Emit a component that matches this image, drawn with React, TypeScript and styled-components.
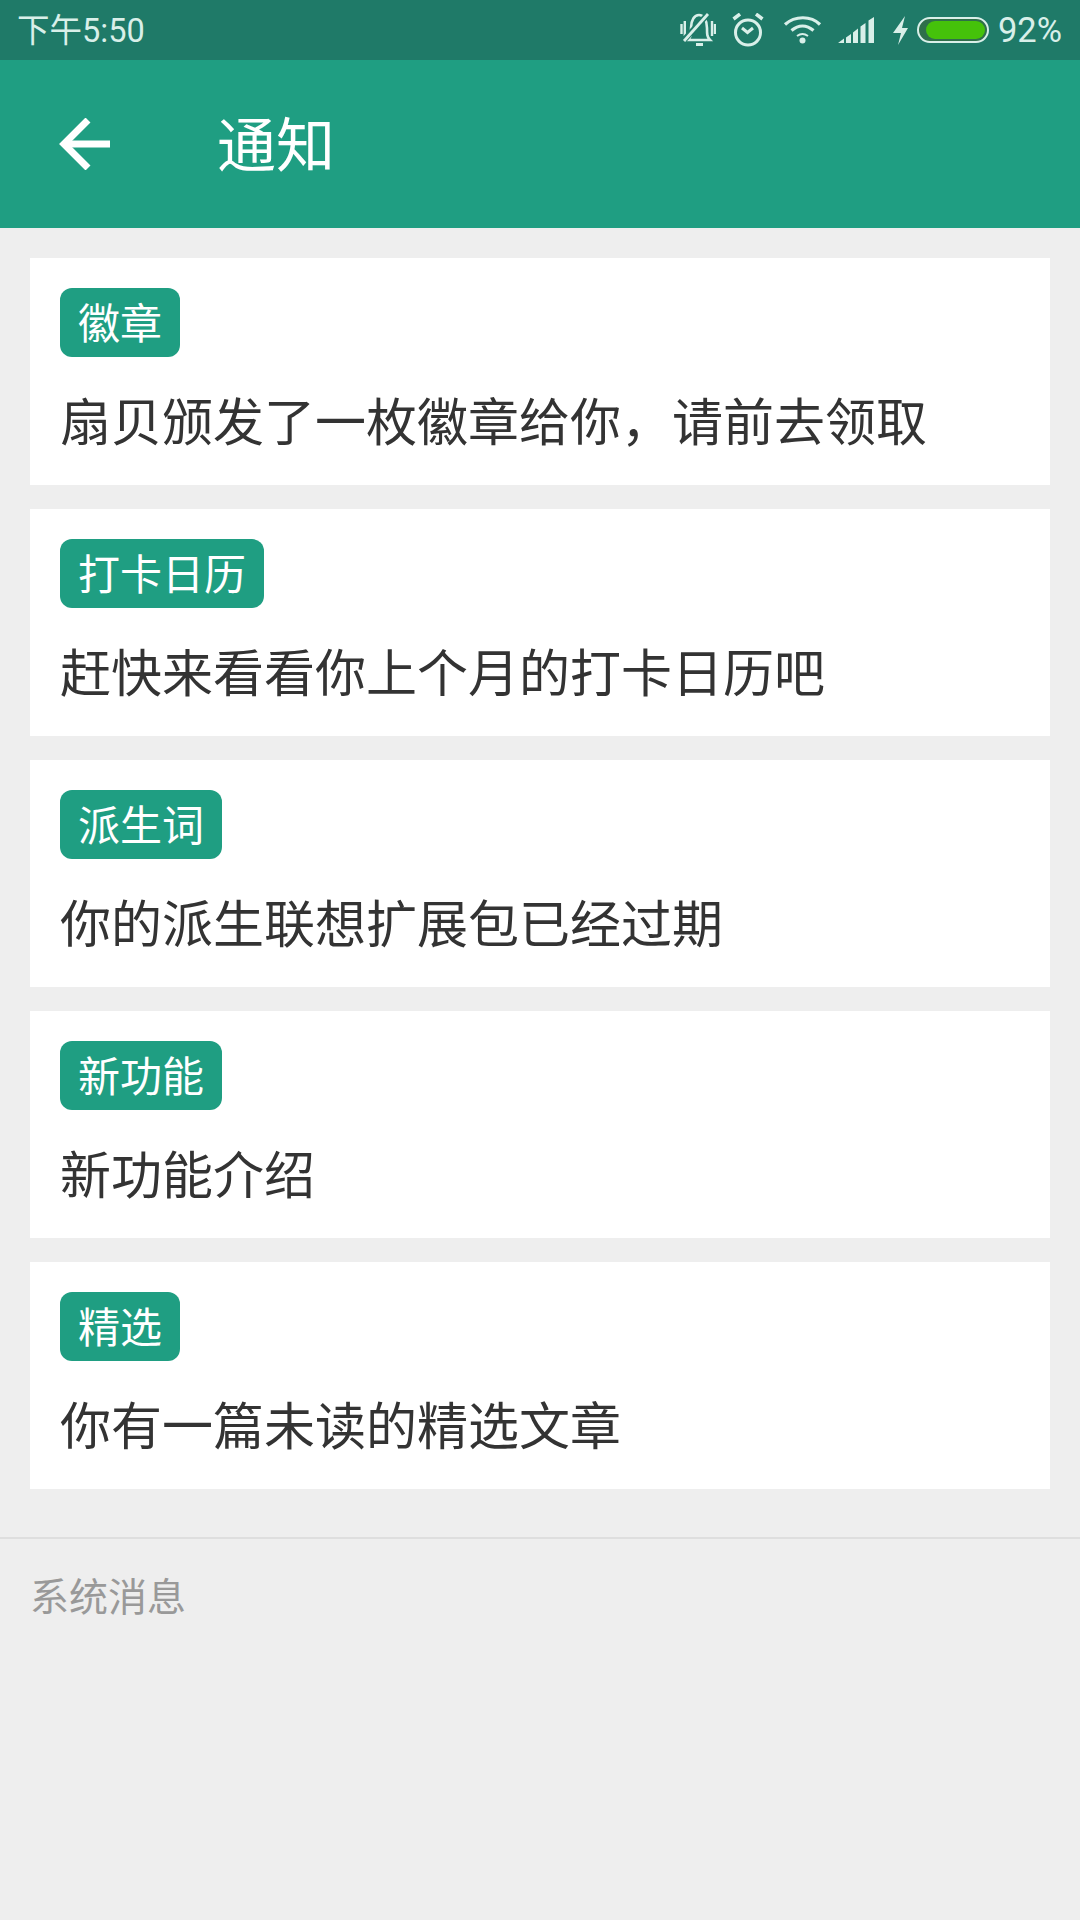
import React from 'react';
import styled, { createGlobalStyle } from 'styled-components';

const CJK = `"Noto Sans CJK SC", "Noto Sans", sans-serif`;

const GlobalStyle = createGlobalStyle`
  html, body {
    margin: 0;
    padding: 0;
    background: #eeeeee;
  }
`;

const NOTICES = [
  { tag: '徽章', text: '扇贝颁发了一枚徽章给你，请前去领取' },
  { tag: '打卡日历', text: '赶快来看看你上个月的打卡日历吧' },
  { tag: '派生词', text: '你的派生联想扩展包已经过期' },
  { tag: '新功能', text: '新功能介绍' },
  { tag: '精选', text: '你有一篇未读的精选文章' },
];

export default function App() {
  return (
    <Page>
      <GlobalStyle />
      <StatusBar>
        <Time>下午5:50</Time>
        <StatusIcons>
          <MuteIcon />
          <AlarmIcon />
          <WifiIcon />
          <SignalIcon />
          <BoltIcon />
          <Battery>
            <BatteryFill />
          </Battery>
          <Percent>92%</Percent>
        </StatusIcons>
      </StatusBar>
      <Toolbar>
        <BackIcon />
        <ToolbarTitle>通知</ToolbarTitle>
      </Toolbar>
      <NoticeList>
        {NOTICES.map(({ tag, text }) => (
          <NoticeCard key={tag}>
            <Tag>{tag}</Tag>
            <NoticeText>{text}</NoticeText>
          </NoticeCard>
        ))}
      </NoticeList>
      <SystemSection>
        <SystemLabel>系统消息</SystemLabel>
      </SystemSection>
    </Page>
  );
}

function MuteIcon() {
  return (
    <svg width="36" height="34" viewBox="0 0 36 34" fill="none" stroke="#d9efe9" strokeWidth="2.600">
      <path d="M8 27c3-3 3-6 3-12 0-8 3.500-13 8-13s8 5 8 13c0 6 0 9 3 12z" />
      <path d="M16 31.500h7" strokeWidth="3" />
      <path d="M1.500 11v10M4.800 8v15M32 8v15M35 11v10" strokeWidth="2.400" />
      <path d="M4 27 28 1" stroke="#1f7a68" strokeWidth="6" />
      <path d="M4 28 28 1" strokeWidth="2.800" />
    </svg>
  );
}

function AlarmIcon() {
  return (
    <svg width="34" height="34" viewBox="0 0 34 34" fill="none" stroke="#d9efe9" strokeWidth="3">
      <circle cx="16" cy="19.500" r="12.500" />
      <path d="M10 15l5.500 4.500L21 15" />
      <path d="M1.500 6l6.500-5M30.500 6 24 1" strokeWidth="3.500" />
    </svg>
  );
}

function WifiIcon() {
  return (
    <svg width="40" height="28" viewBox="0 0 40 28" fill="none" stroke="#d9efe9" strokeWidth="3.200">
      <path d="M3 8.500c10-9 26-9 35 0" />
      <path d="M9.500 14.500c7-6 15-6 22 0" />
      <path d="M15 20c3.500-2.500 7.500-2.500 11 0" strokeWidth="2" />
      <circle cx="20.500" cy="24.500" r="3" fill="#d9efe9" stroke="none" />
    </svg>
  );
}

function SignalIcon() {
  return (
    <svg width="38" height="26" viewBox="0 0 38 26" fill="#d9efe9">
      <path d="M0 26l6-4.500V26zM8 20.500l5-3.500v9H8zM15 15.500l5-4V26h-5zM22.500 9.500l5-3.500v20h-5zM30.500 3.500 36 0v26h-5.500z" />
    </svg>
  );
}

function BoltIcon() {
  return (
    <svg width="18" height="30" viewBox="0 0 18 30" fill="#d9efe9">
      <path d="M13 1 1 18h8L6 30l10-17h-6z" />
    </svg>
  );
}

function BackIcon() {
  return (
    <BackSvg width="52" height="52" viewBox="0 0 52 52" fill="none" stroke="#ffffff" strokeWidth="7">
      <path d="M51 26H5" />
      <path d="M29 2 5 26l24 24" />
    </BackSvg>
  );
}

const Page = styled.div`
  width: 1080px;
  height: 1920px;
  overflow: hidden;
  display: flex;
  flex-direction: column;
  background: #eeeeee;
  font-family: ${CJK};
`;

const StatusBar = styled.div`
  height: 60px;
  background: #1f7a68;
  display: flex;
  align-items: center;
  justify-content: space-between;
  padding: 0 18px;
  box-sizing: border-box;
`;

const Time = styled.span`
  color: #d9efe9;
  font-size: 32.500px;
  line-height: 1;
  margin: 2px 0 0 -1px;
  font-family: Roboto, ${CJK};
`;

const StatusIcons = styled.div`
  display: flex;
  align-items: center;
  gap: 16px;
`;

const Battery = styled.div`
  width: 72px;
  height: 26px;
  box-sizing: border-box;
  border: 2px solid #d9efe9;
  border-radius: 13px;
  padding: 2px;
  margin-left: -9px;
  background: #2f6f4a;
`;

const BatteryFill = styled.div`
  width: 92%;
  height: 100%;
  margin-left: auto;
  background: #45c20a;
  border-radius: 9px;
`;

const Percent = styled.span`
  color: #d9efe9;
  font-size: 34.500px;
  line-height: 1;
  font-family: Roboto, sans-serif;
  margin: 1px 0 0 -7px;
`;

const Toolbar = styled.div`
  height: 168px;
  background: #1f9e82;
  display: flex;
  align-items: center;
  padding-left: 59px;
  box-sizing: border-box;
`;

const BackSvg = styled.svg`
  margin-top: -1px;
`;

const ToolbarTitle = styled.h1`
  margin: 0 0 6px 106px;
  color: #ffffff;
  font-size: 59px;
  font-weight: 400;
  line-height: 1;
`;

const NoticeList = styled.div`
  display: flex;
  flex-direction: column;
  gap: 24px;
  padding: 30px 30px 48px;
`;

const NoticeCard = styled.div`
  height: 227px;
  box-sizing: border-box;
  background: #ffffff;
  padding: 30px;
  display: flex;
  flex-direction: column;
  align-items: flex-start;
  gap: 32px;
`;

const Tag = styled.span`
  height: 69px;
  box-sizing: border-box;
  padding: 0 18px 4px;
  display: flex;
  align-items: center;
  background: #1f9e82;
  border-radius: 12px;
  color: #ffffff;
  font-size: 42px;
  line-height: 1;
`;

const NoticeText = styled.p`
  margin: 0;
  color: #333333;
  font-size: 51px;
  line-height: 60px;
`;

const SystemSection = styled.div`
  border-top: 2px solid #dedede;
  padding: 28px 30px 0;
`;

const SystemLabel = styled.span`
  display: block;
  color: #999999;
  font-size: 39px;
  line-height: 54px;
`;
